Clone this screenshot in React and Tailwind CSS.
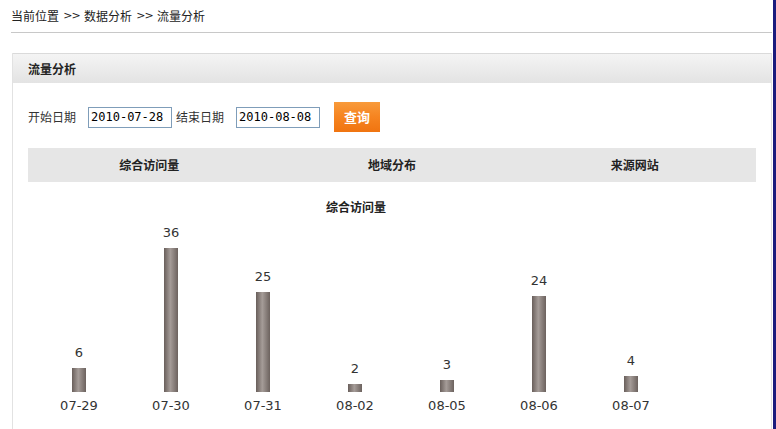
import React from 'react';

const CN = "font-['SimSun','Noto_Sans_CJK_SC',sans-serif]";

const visits = [
    { day: '07-29', count: 6 },
    { day: '07-30', count: 36 },
    { day: '07-31', count: 25 },
    { day: '08-02', count: 2 },
    { day: '08-05', count: 3 },
    { day: '08-06', count: 24 },
    { day: '08-07', count: 4 },
];

const tabs = ['综合访问量', '地域分布', '来源网站'];

const DateInput = ({ value }) => (
    <input
        readOnly
        value={value}
        className="w-[84px] h-[21px] px-[2px] border border-[#7f9db9] bg-white text-[12px] text-black font-['DejaVu_Sans_Mono',monospace] outline-none"
    />
);

const Sep = () => (
    <span className="inline-block w-[25px] text-center font-['DejaVu_Sans',sans-serif] text-[11px] tracking-[-1px]">&gt;&gt;</span>
);

const App = () => {
    return (
        <div className={`w-[776px] h-[429px] overflow-hidden bg-white border-r-[3px] border-[#1b1b7d] pl-[12px] pr-[1px] text-[#333] ${CN}`}>
            {/* breadcrumb */}
            <div className="h-[33px] flex items-center border-b border-[#c8c8c8] text-[12px] -ml-[1px] text-[#222]">
                <span>当前位置</span>
                <Sep />
                <span>数据分析</span>
                <Sep />
                <span>流量分析</span>
            </div>

            <div className="mt-[20px] border-l border-r border-[#e2e2e2] h-[400px]">
                <div className="h-[30px] flex items-center pl-[15px] border-t border-[#dadada] bg-[linear-gradient(to_bottom,#f4f4f4,#e3e3e3)] text-[12px] font-bold text-[#222]">
                    流量分析
                </div>

                <div className="px-[15px]">
                    {/* date filter */}
                    <div className="mt-[19px] h-[30px] flex items-center text-[12px]">
                        <span>开始日期</span>
                        <span className="ml-[12px]"><DateInput value="2010-07-28" /></span>
                        <span className="ml-[4px]">结束日期</span>
                        <span className="ml-[12px]"><DateInput value="2010-08-08" /></span>
                        <button className="ml-[14px] w-[46px] h-[30px] bg-[linear-gradient(to_bottom,#f89a3a,#f68420_50%,#f07410)] text-white text-[13px] font-bold">
                            查询
                        </button>
                    </div>

                    {/* tabs */}
                    <div className="mt-[16px] h-[34px] flex bg-[#e6e6e6]">
                        {tabs.map((t) => (
                            <div key={t} className="flex-1 flex items-center justify-center text-[12px] font-bold text-[#222]">
                                {t}
                            </div>
                        ))}
                    </div>

                    <div className="mt-[17px] h-[16px] leading-[16px] text-center text-[12px] font-bold text-[#222] -ml-[72px]">
                        综合访问量
                    </div>

                    {/* bar chart */}
                    <div className="pl-[5px] flex font-['DejaVu_Sans',sans-serif] text-[13px] text-[#333]">
                        {visits.map((v) => (
                            <div key={v.day} className="w-[92px] flex flex-col items-center">
                                <div className="h-[177px] flex flex-col items-center justify-end">
                                    <span className="leading-[16px] mb-[7px]">{v.count}</span>
                                    <div
                                        className="w-[14px] bg-[linear-gradient(to_right,#695f5b,#a59c98_45%,#6c625e)]"
                                        style={{ height: v.count * 4 }}
                                    />
                                </div>
                                <span className="mt-[6px] leading-[16px]">{v.day}</span>
                            </div>
                        ))}
                    </div>
                </div>
            </div>
        </div>
    );
};

export default App;
